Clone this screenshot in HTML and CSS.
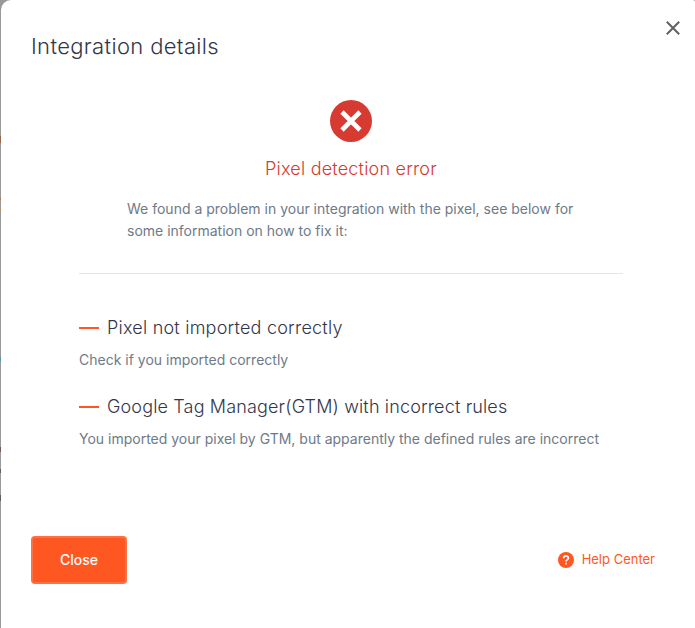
FILE: index.html
```html
<!DOCTYPE html>
<html lang="en">
<head>
<meta charset="utf-8">
<title>Integration details</title>
<link rel="stylesheet" href="styles.css">
</head>
<body>
<main class="modal" role="dialog">
  <header class="header">
    <h1 class="title">Integration details</h1>
    <svg class="dismiss" width="14" height="14" viewBox="0 0 14 14"><path d="M.8.8l12.4 12.4M13.2.8L.8 13.2"/></svg>
  </header>
  <section class="summary">
    <svg class="error-icon" width="42" height="42" viewBox="0 0 42 42"><circle cx="21" cy="21" r="21"/><path d="M12 12l18 18M30 12L12 30"/></svg>
    <h2 class="error-title">Pixel detection error</h2>
    <p class="text intro">We found a problem in your integration with the pixel, see below for some information on how to fix it:</p>
  </section>
  <section class="issues">
    <article>
      <h3 class="issue-title">Pixel not imported correctly</h3>
      <p class="text">Check if you imported correctly</p>
    </article>
    <article>
      <h3 class="issue-title issue-title-long">Google Tag Manager(GTM) with incorrect rules</h3>
      <p class="text">You imported your pixel by GTM, but apparently the defined rules are incorrect</p>
    </article>
  </section>
  <footer class="footer">
    <button class="close">Close</button>
    <a class="help"><svg width="16" height="16" viewBox="0 0 16 16"><circle cx="8" cy="8" r="8"/><path d="M5.7 6.2C5.7 3.2 10.4 3.3 10.4 6 10.4 7.6 8 7.6 8 9.5M8 10.8v1.8"/></svg><span class="help-label">Help Center</span></a>
  </footer>
</main>
</body>
</html>
```
FILE: styles.css
```css
* { box-sizing: border-box; margin: 0; }
body {
  height: 628px;
  padding-left: 1px;
  overflow: hidden;
  font-family: Inter, "Liberation Sans", sans-serif;
  background: linear-gradient(#999 0 136px, #97694b 136px 143px, #999 143px 198px, #b97834 198px 200px, #999 200px 208px, #b98b4c 208px 209px, #999 209px 357px, #5294ad 357px 361px, #999 361px 447px, #765a50 447px 452px, #999 452px 469px, #59606f 469px 473px, #999 473px 495px, #635b62 495px 501px, #999 501px);
}
.modal {
  height: 628px;
  padding: 0 15px 0 30px;
  background: #fff;
  border-radius: 10px 0 0 10px;
  border-top-right-radius: 2px;
  border-bottom-left-radius: 0;
}
.header { display: flex; justify-content: space-between; height: 100px; }
.title { padding-top: 30px; font-size: 22px; line-height: 32px; font-weight: 300; letter-spacing: .35px; color: #32364a; }
.dismiss { margin-top: 21px; fill: none; stroke: #606163; stroke-width: 2; }
.summary {
  display: flex;
  flex-direction: column;
  align-items: center;
  width: 544px;
  height: 174px;
  margin-left: 48px;
  border-bottom: 1px solid #dfe8e8;
}
.error-icon { fill: #d63a31; }
.error-icon path { stroke: #fff; stroke-width: 4.6; }
.error-title { margin-top: 14px; font-size: 18px; line-height: 26px; font-weight: 300; letter-spacing: .2px; color: #d63a31; }
.text { font-size: 14px; line-height: 22px; font-weight: 400; color: #6e7a88; }
.intro { width: 448px; margin-top: 16px; }
.issues { height: 262px; margin-left: 48px; padding-top: 41px; }
.issues article { height: 79px; }
.issue-title { display: flex; align-items: center; gap: 8px; margin-bottom: 8px; font-size: 18px; line-height: 26px; font-weight: 300; letter-spacing: .22px; color: #32364a; }
.issue-title-long { letter-spacing: .15px; }
.issue-title::before { content: ""; width: 20px; height: 2px; background: #ff5722; }
.footer { display: flex; align-items: center; justify-content: space-between; padding-right: 25px; }
.close { width: 96px; height: 48px; padding: 0 6px 2px; border: 2px solid #ff7043; border-radius: 4px; background: #ff5722; color: #fff; font: 500 14px Inter, sans-serif; }
.help { display: flex; align-items: center; gap: 8px; font-size: 13px; line-height: 20px; color: #ff5722; }
.help-label { padding-bottom: 2px; }
.help svg { fill: #ff5722; }
.help path { fill: none; stroke: #fff; stroke-width: 1.7; }
```
